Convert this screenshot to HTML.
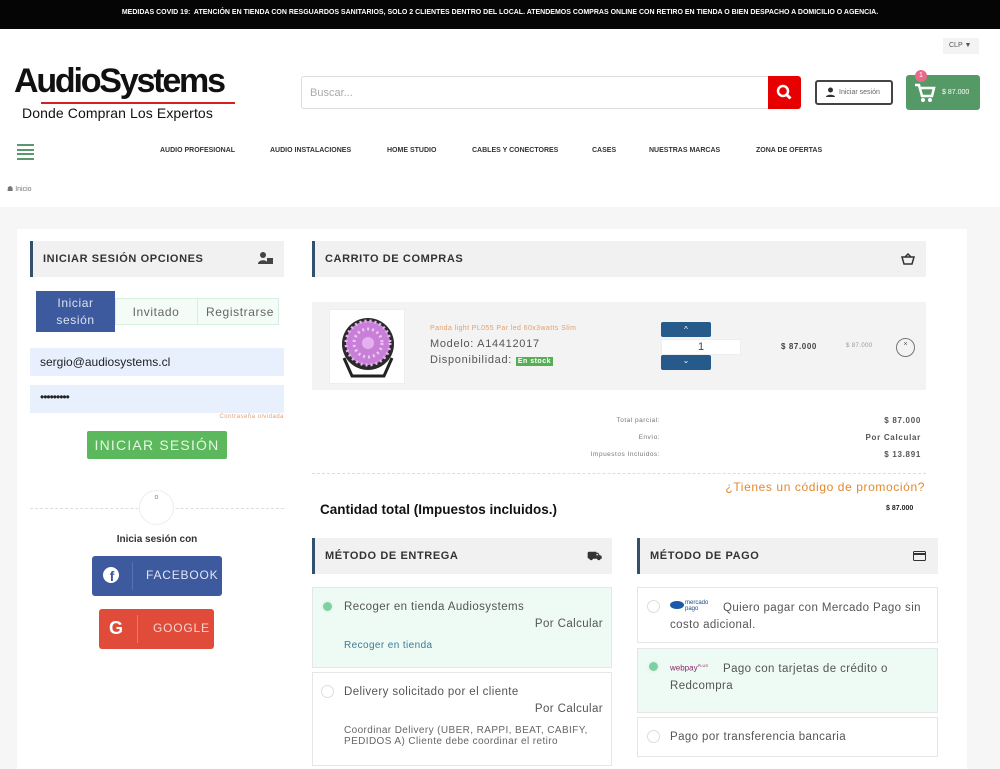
<!DOCTYPE html>
<html><head><meta charset="utf-8"><style>
*{box-sizing:border-box;margin:0;padding:0}
body{width:1000px;height:768px;overflow:hidden;background:#f6f6f6;font-family:"Liberation Sans",sans-serif;color:#333;position:relative}
.a{position:absolute}
.top{left:0;top:0;width:1000px;height:29px;background:#050505;color:#fff;font-size:7px;font-weight:bold;text-align:center;line-height:25px}
.hdr{left:0;top:29px;width:1000px;height:178px;background:#fff}
.nav{top:147px;font-size:7px;font-weight:bold;color:#333}
.card{left:17px;top:229px;width:950px;height:540px;background:#fff}
.bh{background:#f1f1f1;border-left:3px solid #33506e;font-size:11px;font-weight:bold;letter-spacing:.6px;color:#333;padding-left:10px;line-height:36px;height:36px}
.r{text-align:right}
.radio{width:13px;height:13px;border-radius:50%;border:1px solid #ddd;background:#fff}
.radio.on{background:#7fd0a0;border:2px solid #e8f7ee}
.opt{border:1px solid #e6e6e6;background:#fff;font-size:11.5px;color:#555;letter-spacing:.4px}
.opt.g{background:#eefaf4}
</style></head><body>
<div class="a top">MEDIDAS COVID 19:&nbsp; ATENCIÓN EN TIENDA CON RESGUARDOS SANITARIOS, SOLO 2 CLIENTES DENTRO DEL LOCAL. ATENDEMOS COMPRAS ONLINE CON RETIRO EN TIENDA O BIEN DESPACHO A DOMICILIO O AGENCIA.</div>
<div class="a hdr"></div>
<div class="a" style="left:943px;top:38px;width:36px;height:16px;background:#f3f3f3;font-size:7px;color:#555;line-height:16px;padding-left:6px">CLP <span style="font-size:7px">▼</span></div>
<div class="a" style="left:14px;top:62px;font-size:34px;font-weight:bold;letter-spacing:-2.2px;color:#111;line-height:38px">AudioSystems</div>
<div class="a" style="left:41px;top:102px;width:194px;height:2px;background:#d42020"></div>
<div class="a" style="left:22px;top:105px;font-size:14px;color:#111;line-height:16px;letter-spacing:.1px">Donde Compran Los Expertos</div>
<div class="a" style="left:301px;top:76px;width:468px;height:33px;border:1px solid #ddd;border-radius:3px 0 0 3px;font-size:11px;color:#aaa;padding:10px 8px">Buscar...</div>
<div class="a" style="left:768px;top:76px;width:33px;height:33px;background:#e60000;border-radius:0 3px 3px 0">
<svg width="33" height="33" viewBox="0 0 33 33"><circle cx="15" cy="15" r="5" stroke="#fff" stroke-width="2.5" fill="none"/><path d="M18.5 18.5l4 4" stroke="#fff" stroke-width="3"/></svg></div>
<div class="a" style="left:815px;top:80px;width:78px;height:25px;border:2px solid #444;border-radius:3px;font-size:7px;color:#666;line-height:21px;padding-left:22px">Iniciar sesión
<svg class="a" style="left:8px;top:5px" width="11" height="11" viewBox="0 0 11 11"><circle cx="5.5" cy="3" r="2.5" fill="#333"/><path d="M1 10c0-3 9-3 9 0z" fill="#333"/></svg></div>
<div class="a" style="left:906px;top:75px;width:74px;height:35px;background:#559966;border-radius:3px;color:#fff;font-size:7px;line-height:35px;padding-left:36px">$ 87.000
<svg class="a" style="left:8px;top:7px" width="22" height="22" viewBox="0 0 22 22"><path d="M1 3h4l3 11h10l2-8H7" stroke="#fff" stroke-width="2.5" fill="none"/><circle cx="9" cy="18" r="2" fill="#fff"/><circle cx="16" cy="18" r="2" fill="#fff"/></svg></div>
<div class="a" style="left:915px;top:70px;width:12px;height:12px;border-radius:50%;background:#e86a8a;color:#fff;font-size:7px;text-align:center;line-height:12px">1</div>
<div class="a" style="left:17px;top:144px;width:17px">
<div style="height:2px;background:#5a9970;margin-bottom:2.5px"></div><div style="height:2px;background:#5a9970;margin-bottom:2.5px"></div><div style="height:2px;background:#5a9970;margin-bottom:2.5px"></div><div style="height:2px;background:#5a9970"></div></div>
<div class="a nav" style="left:160px">AUDIO PROFESIONAL</div>
<div class="a nav" style="left:270px">AUDIO INSTALACIONES</div>
<div class="a nav" style="left:387px">HOME STUDIO</div>
<div class="a nav" style="left:472px">CABLES Y CONECTORES</div>
<div class="a nav" style="left:592px">CASES</div>
<div class="a nav" style="left:649px">NUESTRAS MARCAS</div>
<div class="a nav" style="left:756px">ZONA DE OFERTAS</div>
<div class="a" style="left:7px;top:185px;font-size:7px;color:#777">&#9751; Inicio</div>

<div class="a card"></div>
<div class="a bh" style="left:30px;top:241px;width:254px">INICIAR SESIÓN OPCIONES
<svg class="a" style="left:225px;top:11px" width="16" height="13" viewBox="0 0 16 13"><circle cx="5" cy="3" r="3" fill="#444"/><path d="M0 12c0-5 10-5 10 0z" fill="#444"/><rect x="9" y="6" width="6" height="6" fill="#444"/></svg></div>
<div class="a" style="left:115px;top:298px;width:164px;height:27px;border:1px solid #d8eee2;background:#f3fcf7"></div>
<div class="a" style="left:197px;top:298px;width:1px;height:27px;background:#d8eee2"></div>
<div class="a" style="left:36px;top:291px;width:79px;height:41px;background:#3d5a9e;color:#dce3f2;font-size:12px;text-align:center;line-height:17px;padding-top:4px;letter-spacing:.6px">Iniciar<br>sesión</div>
<div class="a" style="left:115px;top:305px;width:82px;text-align:center;font-size:12px;color:#666;letter-spacing:.6px">Invitado</div>
<div class="a" style="left:197px;top:305px;width:86px;text-align:center;font-size:12px;color:#666;letter-spacing:.6px">Registrarse</div>
<div class="a" style="left:30px;top:348px;width:254px;height:28px;background:#e8f0fe;font-size:12px;color:#222;padding:7px 10px">sergio@audiosystems.cl</div>
<div class="a" style="left:30px;top:385px;width:254px;height:28px;background:#e8f0fe;font-size:12px;color:#222;padding:5px 10px;letter-spacing:-1px">•••••••••</div>
<div class="a" style="left:160px;top:414px;width:124px;text-align:right;font-size:6px;color:#e0a070;letter-spacing:.5px">Contraseña olvidada</div>
<div class="a" style="left:87px;top:431px;width:140px;height:28px;background:#5cb85c;border-radius:2px;color:#e6f7e6;font-size:14px;text-align:center;line-height:28px;letter-spacing:1.2px">INICIAR SESIÓN</div>
<div class="a" style="left:30px;top:508px;width:254px;border-top:1px dashed #ddd"></div>
<div class="a" style="left:139px;top:490px;width:35px;height:35px;border-radius:50%;background:#fff;border:1px solid #eee;text-align:center;font-size:7px;color:#888;line-height:14px">o</div>
<div class="a" style="left:30px;top:534px;width:254px;text-align:center;font-size:10px;font-weight:bold;color:#333">Inicia sesión con</div>
<div class="a" style="left:92px;top:556px;width:130px;height:40px;background:#3d5a9e;border-radius:3px;color:#e0e6f4;font-size:12px;letter-spacing:.8px;line-height:38px;padding-left:54px">FACEBOOK
<div class="a" style="left:40px;top:6px;width:1px;height:28px;background:#5670b0"></div>
<div class="a" style="left:11px;top:11px;width:16px;height:16px;border-radius:50%;background:#fff;color:#3d5a9e;font-size:14px;font-weight:bold;line-height:19px;text-align:center;letter-spacing:0;padding-left:2px">f</div></div>
<div class="a" style="left:99px;top:609px;width:115px;height:40px;background:#e04b3a;border-radius:3px;color:#f6d5d0;font-size:12px;letter-spacing:.8px;line-height:38px;padding-left:54px">GOOGLE
<div class="a" style="left:38px;top:6px;width:1px;height:28px;background:#ea7a6c"></div>
<div class="a" style="left:10px;top:0;color:#fff;font-size:18px;font-weight:bold;letter-spacing:0">G</div></div>

<div class="a bh" style="left:312px;top:241px;width:614px">CARRITO DE COMPRAS
<svg class="a" style="left:586px;top:12px" width="14" height="12" viewBox="0 0 14 12"><path d="M1 4h12l-2 7H3z M4 4l3-3 3 3" fill="none" stroke="#333" stroke-width="1.5"/></svg></div>
<div class="a" style="left:312px;top:302px;width:614px;height:88px;background:#f3f3f3"></div>
<div class="a" style="left:329px;top:309px;width:76px;height:75px;background:#fff;border:1px solid #eee">
<svg width="76" height="75" viewBox="0 0 76 75"><path d="M14 48 L22 66 L54 66 L62 48" stroke="#222" stroke-width="3" fill="none"/><circle cx="38" cy="34" r="26" fill="#2a2a2a"/><circle cx="38" cy="33" r="22" fill="#c87fd8"/><circle cx="38" cy="33" r="22" fill="none" stroke="#e7b6ef" stroke-width="3" stroke-dasharray="2 3"/><circle cx="38" cy="33" r="14" fill="none" stroke="#f0c8f5" stroke-width="3" stroke-dasharray="2 3"/><circle cx="38" cy="33" r="6" fill="#e6b0ee"/></svg></div>
<div class="a" style="left:430px;top:325px;font-size:7px;color:#e0a070;letter-spacing:.4px">Panda light PL055 Par led 60x3watts Slim</div>
<div class="a" style="left:430px;top:336px;font-size:11px;color:#555;letter-spacing:.7px;line-height:16px">Modelo: A14412017<br>Disponibilidad: <span style="background:#55b055;color:#fff;font-size:7px;font-weight:bold;padding:1px 2px;letter-spacing:.5px">En stock</span></div>
<div class="a" style="left:661px;top:322px;width:50px;height:15px;background:#265a8a;border-radius:2px;color:#fff;font-size:8px;text-align:center;line-height:16px">^</div>
<div class="a" style="left:661px;top:339px;width:80px;height:16px;background:#fff;border:1px solid #eee;text-align:center;font-size:11px;color:#444;line-height:14px">1</div>
<div class="a" style="left:661px;top:355px;width:50px;height:15px;background:#265a8a;border-radius:2px;color:#fff;font-size:8px;text-align:center;line-height:12px">⌄</div>
<div class="a" style="left:781px;top:342px;font-size:8px;font-weight:bold;color:#444;letter-spacing:.6px">$ 87.000</div>
<div class="a" style="left:846px;top:343px;font-size:6px;color:#999;letter-spacing:.4px">$ 87.000</div>
<div class="a" style="left:896px;top:338px;width:19px;height:19px;border-radius:50%;border:1px solid #777;font-size:7px;text-align:center;line-height:12px;color:#555">×</div>
<div class="a r" style="left:500px;top:412px;width:160px;font-size:6.5px;color:#777;letter-spacing:.5px;line-height:17px">Total parcial:<br>Envío:<br>Impuestos Incluidos:</div>
<div class="a r" style="left:800px;top:412px;width:121px;font-size:8px;font-weight:bold;color:#555;letter-spacing:.7px;line-height:17px">$ 87.000<br>Por Calcular<br>$ 13.891</div>
<div class="a" style="left:312px;top:473px;width:614px;border-top:1px dashed #ddd"></div>
<div class="a r" style="left:600px;top:480px;width:325px;font-size:12px;color:#e08a30;letter-spacing:.6px">¿Tienes un código de promoción?</div>
<div class="a" style="left:320px;top:502px;font-size:13.5px;font-weight:bold;color:#111">Cantidad total (Impuestos incluidos.)</div>
<div class="a" style="left:886px;top:505px;font-size:7px;font-weight:bold;color:#222">$ 87.000</div>

<div class="a bh" style="left:312px;top:538px;width:300px">MÉTODO DE ENTREGA
<span class="a" style="left:272px;top:0;font-size:12px">⛟</span></div>
<div class="a bh" style="left:637px;top:538px;width:301px">MÉTODO DE PAGO
<svg class="a" style="left:273px;top:13px" width="13" height="10" viewBox="0 0 13 10"><rect x="0.5" y="0.5" width="12" height="9" rx="1" fill="none" stroke="#333"/><rect x="0" y="2" width="13" height="2" fill="#333"/></svg></div>

<div class="a opt g" style="left:312px;top:587px;width:300px;height:81px">
<div class="a radio on" style="left:8px;top:12px"></div>
<div class="a" style="left:31px;top:13px">Recoger en tienda Audiosystems</div>
<div class="a r" style="left:100px;top:30px;width:190px">Por Calcular</div>
<div class="a" style="left:31px;top:52px;font-size:10px;color:#3d7a99">Recoger en tienda</div></div>
<div class="a opt" style="left:312px;top:672px;width:300px;height:94px">
<div class="a radio" style="left:8px;top:12px"></div>
<div class="a" style="left:31px;top:13px">Delivery solicitado por el cliente</div>
<div class="a r" style="left:100px;top:30px;width:190px">Por Calcular</div>
<div class="a" style="left:31px;top:52px;font-size:10px;line-height:11px;color:#666">Coordinar Delivery (UBER, RAPPI, BEAT, CABIFY,<br>PEDIDOS A) Cliente debe coordinar el retiro</div></div>

<div class="a opt" style="left:637px;top:587px;width:301px;height:56px">
<div class="a radio" style="left:9px;top:12px"></div>
<div class="a" style="left:32px;top:13px;width:14px;height:8px;border-radius:50%;background:#1a5aa8"></div>
<div class="a" style="left:47px;top:12px;font-size:6px;color:#1a4a8a;line-height:6px;letter-spacing:0">mercado<br>pago</div>
<div class="a" style="left:32px;top:12px;line-height:17px;text-indent:53px;width:260px">Quiero pagar con Mercado Pago sin costo adicional.</div></div>
<div class="a opt g" style="left:637px;top:648px;width:301px;height:65px">
<div class="a radio on" style="left:9px;top:11px"></div>
<div class="a" style="left:32px;top:14px;font-size:8px;color:#8a2a6a;letter-spacing:0">webpay<sup style="font-size:4px">PLUS</sup></div>
<div class="a" style="left:32px;top:12px;line-height:17px;text-indent:53px;width:260px">Pago con tarjetas de crédito o Redcompra</div></div>
<div class="a opt" style="left:637px;top:717px;width:301px;height:40px">
<div class="a radio" style="left:9px;top:12px"></div>
<div class="a" style="left:32px;top:13px">Pago por transferencia bancaria</div></div>
</body></html>
